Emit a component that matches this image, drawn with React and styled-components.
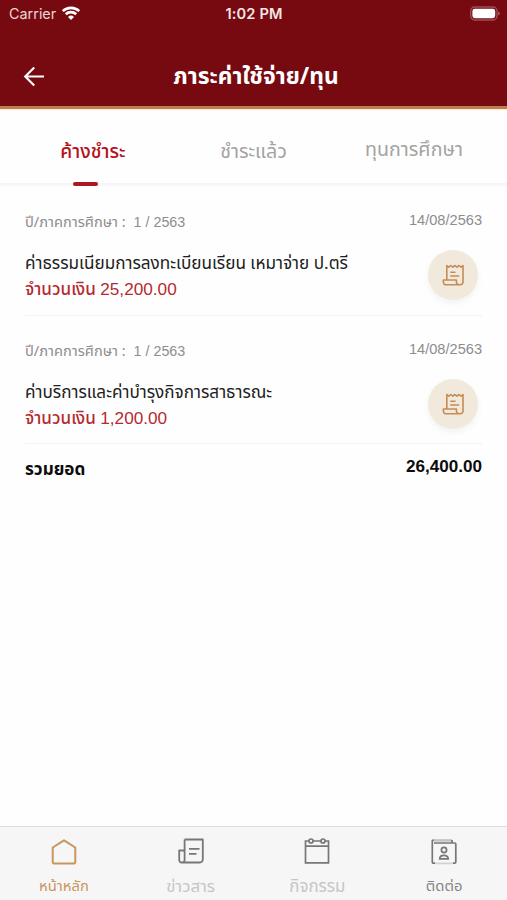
import React from "react";
import styled, { createGlobalStyle } from "styled-components";

const thai = `"Noto Sans Thai", "Noto Sans", "Open Sans", sans-serif`;
const latin = `"Liberation Sans", "Noto Sans Thai", sans-serif`;

const GlobalStyle = createGlobalStyle`
  * { box-sizing: border-box; }
  body { margin: 0; background: #fefefe; }
`;

const Screen = styled.div`
  width: 507px;
  height: 900px;
  display: flex;
  flex-direction: column;
  overflow: hidden;
  background: #fefefe;
  font-family: ${latin};
  white-space: nowrap;
`;

const Header = styled.header`
  height: 109px;
  flex: none;
  background: #770a10;
  border-bottom: 3px solid #bd7d50;
  box-shadow: 0 1px 1px #ffe8cd;
  color: #fff;
`;

const StatusBar = styled.div`
  height: 28px;
  display: grid;
  grid-template-columns: 1fr auto 1fr;
  align-items: center;
  padding: 0 7px 0 9px;
  font: 14.4px/28px Inter, sans-serif;
`;

const Carrier = styled.div`
  display: flex;
  align-items: center;
  gap: 5px;
  color: #ecd5d6;

  svg {
    margin-top: -2px;
  }
`;

const Clock = styled.div`
  margin-left: -1px;
  font-size: 14.6px;
  font-weight: 600;
  letter-spacing: 0.15px;
  color: #f6e6e6;
`;

const BatterySlot = styled.div`
  display: flex;
  justify-content: flex-end;
  padding-bottom: 2px;
`;

const TitleBar = styled.div`
  height: 78px;
  display: grid;
  grid-template-columns: 68px 1fr 68px;
  align-items: center;
  padding-top: 18px;
`;

const BackButton = styled.button`
  border: 0;
  padding: 0 0 0 23px;
  background: none;
  display: flex;
`;

const Title = styled.h1`
  margin: 1px 0 0 5px;
  text-align: center;
  font: 700 22.8px/32px ${thai};
`;

const Tabs = styled.nav`
  height: 77px;
  flex: none;
  display: grid;
  grid-template-columns: 186px 135px 186px;
  border-bottom: 3px solid #f6f6f6;
`;

const Tab = styled.div`
  padding-top: ${(p) => p.$top}px;
  text-align: center;
  font: ${(p) => (p.$active ? 500 : 400)} ${(p) => (p.$active ? 19.2 : 19.6)}px/30px ${thai};
  color: ${(p) => (p.$active ? "#b5121b" : "#a3a3a3")};
`;

const Indicator = styled.div`
  width: 25px;
  height: 4px;
  margin: 14px 0 0 73px;
  border-radius: 2px;
  background: #aa1722;
`;

const List = styled.main`
  flex: 1;
  padding: 0 25px;
`;

const Item = styled.article`
  height: ${(p) => p.$height}px;
  padding-top: ${(p) => p.$top}px;
  border-bottom: 1px solid #f3f3f3;
`;

const MetaRow = styled.div`
  height: 24px;
  display: flex;
  justify-content: space-between;
  line-height: 24px;
  color: #8d8d8d;
`;

const Meta = styled.span`
  padding-top: 2px;
  font-size: 14.3px;
  white-space: pre;
`;

const MetaLabel = styled.span`
  font-family: ${thai};
  font-size: 14.6px;
`;

const IssueDate = styled.span`
  font-size: 14.6px;
`;

const ItemBody = styled.div`
  display: flex;
  justify-content: space-between;
  padding: 18px 4px 0 0;
`;

const Name = styled.div`
  padding-top: 1px;
  font: 17.15px/26px ${thai};
  color: #202020;
`;

const Amount = styled.div`
  margin-top: -1px;
  font-size: 17.2px;
  line-height: 26px;
  color: #b52a30;
`;

const AmountLabel = styled.span`
  font: 500 17.1px/26px ${thai};
`;

const ReceiptButton = styled.button`
  width: 50px;
  height: 50px;
  border: 0;
  border-radius: 50%;
  padding: 0;
  display: grid;
  place-items: center;
  background: #f1eadc;
  box-shadow: 0 3px 7px rgba(0, 0, 0, 0.05);
`;

const TotalRow = styled.div`
  display: flex;
  justify-content: space-between;
  padding-top: 10px;
  color: #0c0c0c;
`;

const TotalLabel = styled.span`
  padding-top: 3px;
  font: 700 17.1px/26px ${thai};
`;

const TotalValue = styled.span`
  font: 700 17.1px/26px ${latin};
`;

const BottomNav = styled.footer`
  height: 74px;
  flex: none;
  display: grid;
  grid-template-columns: repeat(4, 1fr);
  border-top: 1px solid #dedede;
  background: #f6f6f6;
`;

const NavItem = styled.div`
  display: flex;
  flex-direction: column;
  align-items: center;
  padding: 11px 0 0 1px;
  gap: 9px;
  color: ${(p) => p.$color};
`;

const NavLabel = styled.span`
  font: ${(p) => p.$size}px/24px ${thai};
`;

const Wifi = () => (
  <svg width="20" height="16" viewBox="0 0 20 16" fill="none" stroke="#fff" strokeWidth="2.7">
    <path d="M1.8 6.1a11.8 11.8 0 0 1 16.4 0M4.8 9.2a7.5 7.5 0 0 1 10.4 0" />
    <path d="M7 11.9a4.4 4.4 0 0 1 6 0L10 15Z" fill="#fff" stroke="none" />
  </svg>
);

const Battery = () => (
  <svg width="31" height="15" viewBox="0 0 31 15">
    <rect x="1.7" y="1" width="26.3" height="13" rx="4" fill="none" stroke="#9d4f54" strokeWidth="1.4" />
    <rect x="3.4" y="2.8" width="22.8" height="9.4" rx="2.4" fill="#fff" />
    <path d="M29.3 5.4v4.2q1.3-.6 1.3-2.1t-1.3-2.1Z" fill="#b77b7f" />
  </svg>
);

const BackArrow = () => (
  <svg width="22" height="22" viewBox="0 0 22 22" fill="none" stroke="#fff" strokeWidth="2.1">
    <path d="M21 11.5H3M11.2 2.5 2.2 11.5l9 9" />
  </svg>
);

const Receipt = () => (
  <svg width="22" height="22" viewBox="0 0 22 22" fill="none" stroke="#c58c55" strokeWidth="1.6" strokeLinejoin="round" strokeLinecap="round">
    <path d="M4.8 15V1.5l2 1.6 2-1.6 2 1.6 2.1-1.6 2 1.6 2.1-1.6 2 1.6 2-1.6V18a2.7 2.7 0 0 1-2.7 2.7H4a2.4 2.4 0 0 1-2.6-2.4V16h13v2a2.7 2.7 0 0 0 2.7 2.7M8.8 8.2h4.2M8.8 12h7.8" />
  </svg>
);

const Home = () => (
  <svg width="26" height="28" viewBox="0 0 26 28" fill="none" stroke="#c8965f" strokeWidth="2" strokeLinejoin="round">
    <path d="M1.7 9.5 13 2.3l11.3 7.2v14.2q0 1.8-1.8 1.8h-19q-1.8 0-1.8-1.8Z" />
  </svg>
);

const News = () => (
  <svg width="26" height="28" viewBox="0 0 26 28" fill="none" stroke="#777" strokeWidth="1.8" strokeLinejoin="round">
    <path d="M6.6 1.5h18.2v20a3 3 0 0 1-3 3H3.6a2.4 2.4 0 0 1-2.4-2.4v-9.6h5.4M6.6 1.5v20.2a2.6 2.6 0 0 1-2.6 2.8M11 10.8h10.5M11 15.8h7.5" />
  </svg>
);

const Calendar = () => (
  <svg width="26" height="28" viewBox="0 0 26 28" fill="none" stroke="#777" strokeWidth="1.7">
    <path d="M5 3H1.5v21.8h23V3H21M9 3h8M1.5 8.2h23" />
    <circle cx="7" cy="3" r="2" />
    <circle cx="19" cy="3" r="2" />
  </svg>
);

const Contact = () => (
  <svg width="26" height="28" viewBox="0 0 26 28" fill="none" stroke="#777" strokeWidth="1.7">
    <path d="M3 2.4h18" stroke="#c2c2c2" strokeWidth="2.4" />
    <path d="M4 25.2H2.5Q1.3 25.2 1.3 24V3Q1.3 2 3 2M3 5h20.8q1 0 1 1v18q0 1.2-1.2 1.2H22M21 2v3" />
    <path d="M4 25.4h18" stroke="#d2d2d2" />
    <circle cx="13" cy="12" r="2.6" />
    <path d="M8.7 20.9c0-4.8 8.6-4.8 8.6 0Z" />
  </svg>
);

const items = [
  { name: "ค่าธรรมเนียมการลงทะเบียนเรียน เหมาจ่าย ป.ตรี", amount: "25,200.00", height: 130, top: 22 },
  { name: "ค่าบริการและค่าบำรุงกิจการสาธารณะ", amount: "1,200.00", height: 128, top: 21 },
];

const navItems = [
  { label: "หน้าหลัก", color: "#c8965f", size: 14.8, Icon: Home },
  { label: "ข่าวสาร", color: "#c6c6c6", size: 16.8, Icon: News },
  { label: "กิจกรรม", color: "#c6c6c6", size: 16.9, Icon: Calendar },
  { label: "ติดต่อ", color: "#858585", size: 14.9, Icon: Contact },
];

export default function App() {
  return (
    <Screen>
      <GlobalStyle />
      <Header>
        <StatusBar>
          <Carrier>Carrier <Wifi /></Carrier>
          <Clock>1:02 PM</Clock>
          <BatterySlot><Battery /></BatterySlot>
        </StatusBar>
        <TitleBar>
          <BackButton aria-label="กลับ"><BackArrow /></BackButton>
          <Title>ภาระค่าใช้จ่าย/ทุน</Title>
        </TitleBar>
      </Header>
      <Tabs>
        <Tab $active $top={29}>ค้างชำระ<Indicator /></Tab>
        <Tab $top={28}>ชำระแล้ว</Tab>
        <Tab $top={26}>ทุนการศึกษา</Tab>
      </Tabs>
      <List>
        {items.map((item) => (
          <Item key={item.name} $height={item.height} $top={item.top}>
            <MetaRow>
              <Meta><MetaLabel>ปี/ภาคการศึกษา :</MetaLabel>{"  1 / 2563"}</Meta>
              <IssueDate>14/08/2563</IssueDate>
            </MetaRow>
            <ItemBody>
              <div>
                <Name>{item.name}</Name>
                <Amount><AmountLabel>จำนวนเงิน </AmountLabel>{item.amount}</Amount>
              </div>
              <ReceiptButton aria-label="ใบเสร็จ"><Receipt /></ReceiptButton>
            </ItemBody>
          </Item>
        ))}
        <TotalRow>
          <TotalLabel>รวมยอด</TotalLabel>
          <TotalValue>26,400.00</TotalValue>
        </TotalRow>
      </List>
      <BottomNav>
        {navItems.map(({ label, color, size, Icon }) => (
          <NavItem key={label} $color={color}>
            <Icon />
            <NavLabel $size={size}>{label}</NavLabel>
          </NavItem>
        ))}
      </BottomNav>
    </Screen>
  );
}
